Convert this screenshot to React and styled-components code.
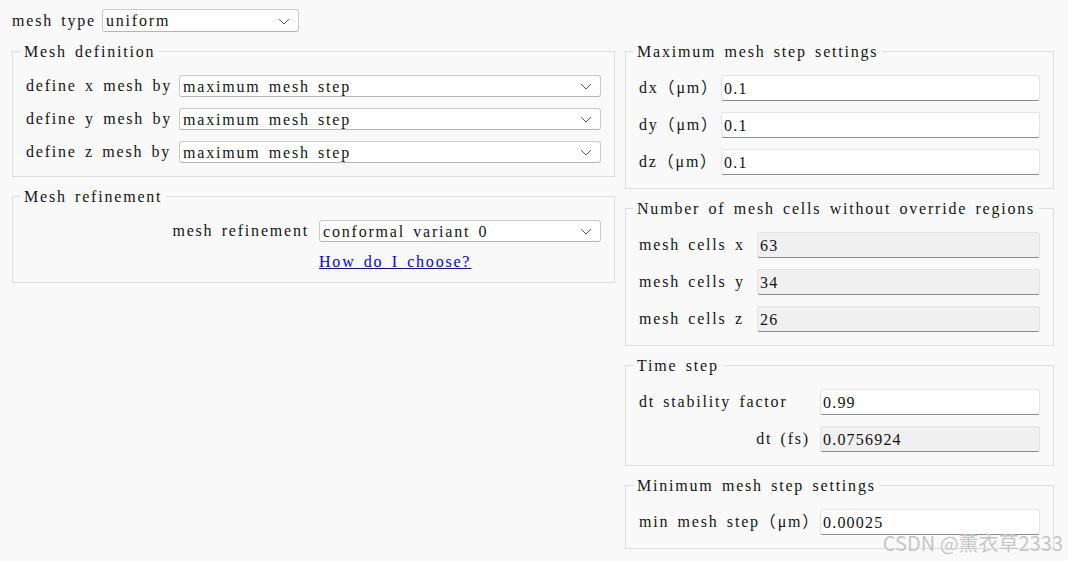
import React from "react";
import styled, { createGlobalStyle } from "styled-components";

const Global = createGlobalStyle`
  html, body { margin: 0; padding: 0; background: #f9f9f9; }
  body { font-family: "Liberation Serif", "Noto Sans CJK SC", serif; }
  * { box-sizing: border-box; }
`;

const typeface = `
  font-family: "Liberation Serif", "Noto Sans CJK SC", serif;
  font-size: 16px;
  letter-spacing: 1.8px;
  word-spacing: 2.5px;
  color: #141414;
`;

const Page = styled.div`
  position: relative;
  width: 1068px;
  height: 561px;
  padding: 9px 14px 0 12px;
  display: grid;
  grid-template-columns: 603px 429px;
  grid-template-rows: 23px auto;
  column-gap: 10px;
  row-gap: 10px;
  align-items: start;
`;

const TopRow = styled.div`
  grid-column: 1;
  grid-row: 1;
  display: grid;
  grid-template-columns: 81px 197px;
  align-items: center;
  column-gap: 9px;
`;

const Column = styled.div`
  grid-row: 2;
  display: flex;
  flex-direction: column;
  gap: 10px;
`;

const Label = styled.span`
  ${typeface}
  line-height: 20px;
  white-space: nowrap;
  justify-self: ${(p) => (p.$end ? "end" : "start")};
`;

const Fieldset = styled.fieldset`
  margin: 0;
  padding: 0;
  min-width: 0;
  border: 1px solid #dddddd;
`;

const Legend = styled.legend`
  ${typeface}
  line-height: 18px;
  margin-left: 7px;
  padding: 1px 4px 0 4px;
  height: 18px;
`;

const FieldGrid = styled.div`
  display: grid;
  grid-template-columns: ${(p) => p.$cols};
  column-gap: ${(p) => p.$colGap || 10}px;
  row-gap: ${(p) => p.$rowGap || 11}px;
  align-items: center;
  padding: 15px 13px ${(p) => p.$pb || 13}px 13px;
`;

const SelectBox = styled.div`
  ${typeface}
  height: ${(p) => p.$h || 22}px;
  background: #ffffff;
  border: 1px solid #c9c9c9;
  border-bottom-color: #b5b5b5;
  border-radius: 3px;
  display: flex;
  align-items: center;
  justify-content: space-between;
  padding: 1px 8px 0 3px;
  line-height: 18px;
`;

const Chevron = () => (
  <svg width="12" height="7" viewBox="0 0 12 7" aria-hidden="true">
    <path d="M1 1 L6 6 L11 1" fill="none" stroke="#5a5a5a" strokeWidth="1" />
  </svg>
);

const Select = ({ value, h }) => (
  <SelectBox $h={h}>
    <span>{value}</span>
    <Chevron />
  </SelectBox>
);

const Input = styled.input`
  ${typeface}
  letter-spacing: 1.2px;
  height: 26px;
  width: 100%;
  background: ${(p) => (p.$grey ? "#f0f0f0" : "#ffffff")};
  border: 1px solid #e3e3e3;
  border-bottom: 1px solid #8a8a8a;
  border-radius: 3px;
  padding: 2px 2px 0 2px;
  outline: none;
  color: #111;
`;

const Link = styled.a`
  ${typeface}
  color: #0000ee;
  text-decoration: underline;
  line-height: 18px;
  grid-column: 2;
  justify-self: start;
`;

const Watermark = styled.div`
  position: absolute;
  right: 5px;
  bottom: 7px;
  font-family: "Noto Sans CJK SC", "Noto Sans", sans-serif;
  font-size: 20px;
  line-height: 22px;
  color: rgba(175, 175, 175, 0.75);
  text-shadow: 0 0 1px #fff, 0 0 1px #fff;
  pointer-events: none;
`;

const SelectRow = ({ label, value }) => (
  <>
    <Label>{label}</Label>
    <Select value={value} />
  </>
);

const InputRow = ({ label, value, grey, end }) => (
  <>
    <Label $end={end}>{label}</Label>
    <Input readOnly value={value} $grey={grey} />
  </>
);

export default function App() {
  return (
    <>
      <Global />
      <Page>
        <TopRow>
          <Label>mesh type</Label>
          <Select value="uniform" h={23} />
        </TopRow>

        <Column>
          <Fieldset>
            <Legend>Mesh definition</Legend>
            <FieldGrid $cols="144px 1fr" $colGap={9}>
              <SelectRow label="define x mesh by" value="maximum mesh step" />
              <SelectRow label="define y mesh by" value="maximum mesh step" />
              <SelectRow label="define z mesh by" value="maximum mesh step" />
            </FieldGrid>
          </Fieldset>

          <Fieldset>
            <Legend>Mesh refinement</Legend>
            <FieldGrid $cols="1fr 282px" $rowGap={11} $pb={11}>
              <Label $end>mesh refinement</Label>
              <Select value="conformal variant 0" />
              <Link href="#">How do I choose?</Link>
            </FieldGrid>
          </Fieldset>
        </Column>

        <Column>
          <Fieldset>
            <Legend>Maximum mesh step settings</Legend>
            <FieldGrid $cols="72px 1fr">
              <InputRow label="dx（μm）" value="0.1" />
              <InputRow label="dy（μm）" value="0.1" />
              <InputRow label="dz（μm）" value="0.1" />
            </FieldGrid>
          </Fieldset>

          <Fieldset>
            <Legend>Number of mesh cells without override regions</Legend>
            <FieldGrid $cols="108px 1fr">
              <InputRow label="mesh cells x" value="63" grey />
              <InputRow label="mesh cells y" value="34" grey />
              <InputRow label="mesh cells z" value="26" grey />
            </FieldGrid>
          </Fieldset>

          <Fieldset>
            <Legend>Time step</Legend>
            <FieldGrid $cols="171px 1fr">
              <InputRow label="dt stability factor" value="0.99" />
              <InputRow label="dt (fs)" value="0.0756924" grey end />
            </FieldGrid>
          </Fieldset>

          <Fieldset>
            <Legend>Minimum mesh step settings</Legend>
            <FieldGrid $cols="171px 1fr">
              <InputRow label="min mesh step（μm）" value="0.00025" />
            </FieldGrid>
          </Fieldset>
        </Column>

        <Watermark>CSDN @薰衣草2333</Watermark>
      </Page>
    </>
  );
}
